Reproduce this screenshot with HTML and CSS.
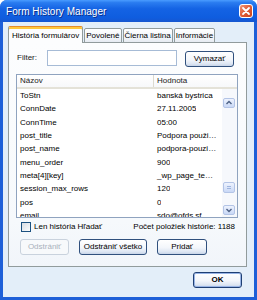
FILE: index.html
```html
<!DOCTYPE html>
<html>
<head>
<meta charset="utf-8">
<link rel="stylesheet" href="styles.css">
</head>
<body>
<div class="win">
  <div class="titlebar">
    <span class="title">Form History Manager</span>
    <span class="close">
      <svg width="14" height="14" viewBox="0 0 14 14">
        <path d="M4 4 L10 10 M10 4 L4 10" stroke="#fff" stroke-width="1.8" stroke-linecap="round"/>
      </svg>
    </span>
  </div>
  <div class="client">
    <div class="tabs">
      <div class="tab active">História formulárov</div>
      <div class="tab">Povolené</div>
      <div class="tab">Čierna listina</div>
      <div class="tab">Informácie</div>
    </div>
    <div class="panel">
      <div class="filter-row">
        <span class="filter-label">Filter:</span>
        <span class="field"></span>
        <button class="btn btn-clear">Vymazať</button>
      </div>
      <div class="list">
        <div class="list-head">
          <div class="col1">Názov</div>
          <div class="col2">Hodnota</div>
        </div>
        <div class="list-body">
          <div class="rows">
            <div class="row"><span class="col1">ToStn</span><span class="col2">banská bystrica</span></div>
            <div class="row"><span class="col1">ConnDate</span><span class="col2">27.11.2005</span></div>
            <div class="row"><span class="col1">ConnTime</span><span class="col2">05:00</span></div>
            <div class="row"><span class="col1">post_title</span><span class="col2">Podpora použi…</span></div>
            <div class="row"><span class="col1">post_name</span><span class="col2">podpora-pouzi…</span></div>
            <div class="row"><span class="col1">menu_order</span><span class="col2">900</span></div>
            <div class="row"><span class="col1">meta[4][key]</span><span class="col2">_wp_page_te…</span></div>
            <div class="row"><span class="col1">session_max_rows</span><span class="col2">120</span></div>
            <div class="row"><span class="col1">pos</span><span class="col2">0</span></div>
            <div class="row"><span class="col1">email</span><span class="col2">sdo@ofds.sf</span></div>
          </div>
          <div class="sbar">
            <span class="sb-btn sb-up">
              <svg width="12" height="10" viewBox="0 0 12 10"><path d="M3.5 6 L6 3.5 L8.5 6" fill="none" stroke="#4d6185" stroke-width="1.4"/></svg>
            </span>
            <span class="sb-thumb">
              <svg width="12" height="11" viewBox="0 0 12 11"><path d="M4 4.5 H8 M4 6.5 H8" stroke="#9fb5de" stroke-width="1"/></svg>
            </span>
            <span class="sb-btn sb-down">
              <svg width="12" height="10" viewBox="0 0 12 10"><path d="M3.5 4 L6 6.5 L8.5 4" fill="none" stroke="#4d6185" stroke-width="1.4"/></svg>
            </span>
          </div>
        </div>
      </div>
      <div class="status-row">
        <label class="check"><span class="cb"></span>Len história Hľadať</label>
        <span class="count">Počet položiek histórie: 1188</span>
      </div>
      <div class="btn-row">
        <button class="btn btn-del" disabled>Odstrániť</button>
        <button class="btn btn-delall">Odstrániť všetko</button>
        <button class="btn btn-add">Pridať</button>
      </div>
    </div>
    <div class="footer">
      <button class="btn btn-ok">OK</button>
    </div>
  </div>
</div>
</body>
</html>
```

FILE: styles.css
```css
* { box-sizing: border-box; }
html, body {
  margin: 0;
  padding: 0;
  background: #ffffff;
}
body {
  font-family: "Liberation Sans", Arial, sans-serif;
  font-size: 8px;
  color: #000;
}
.win {
  width: 257px;
  height: 300px;
  display: flex;
  flex-direction: column;
  background: #1d5fd8;
  border-radius: 7px 7px 0 0;
  overflow: hidden;
}
.titlebar {
  height: 22px;
  flex: 0 0 22px;
  display: flex;
  align-items: center;
  justify-content: space-between;
  padding: 0 4px 0 6px;
  background: linear-gradient(#4a9cff 0%, #2a7cf0 12%, #1463e4 40%, #0f5ddf 80%, #1656d0 100%);
}
.title {
  color: #fff;
  font-size: 10px;
  text-shadow: 1px 1px 0 #0b2f8a;
  letter-spacing: 0.05px;
}
.close {
  width: 14px;
  height: 14px;
  border: 1px solid #fff;
  border-radius: 3px;
  background: linear-gradient(135deg, #f0977a 0%, #e1603a 45%, #c8431c 100%);
  display: flex;
  align-items: center;
  justify-content: center;
}
.close svg { display: block; margin: -1px; }
.client {
  flex: 1;
  margin: 0 3px 3px;
  background: #e3eef9;
  padding: 4px 7px 0 5px;
  display: flex;
  flex-direction: column;
}
.tabs {
  display: flex;
  align-items: flex-end;
  height: 17px;
  margin-bottom: -1px;
  position: relative;
  z-index: 1;
}
.tab {
  height: 15px;
  padding: 0 1px;
  border: 1px solid #919b9c;
  border-radius: 2px 2px 0 0;
  background: linear-gradient(#ffffff, #f1f4f8 70%, #e6ebf2);
  line-height: 13px;
  white-space: nowrap;
  margin-right: 1px;
}
.tab.active {
  height: 17px;
  padding: 0 3px;
  border-bottom: none;
  border-top: 1px solid #e68b2c;
  box-shadow: inset 0 2px 0 #ffc83c;
  background: #fcfdfe;
  line-height: 16px;
  padding-top: 1px;
}
.panel {
  width: 239px;
  height: 225px;
  border: 1px solid #919b9c;
  background: linear-gradient(#fcfdfe, #f6f9fc 80%, #f1f5fa);
  padding: 7px 7px 0 7px;
  display: flex;
  flex-direction: column;
}
.filter-row {
  display: flex;
  height: 17px;
  align-items: flex-start;
}
.filter-label {
  width: 30px;
  margin-left: 1px;
  line-height: 16px;
  color: #1a1a1a;
}
.field {
  width: 130px;
  height: 16px;
  border: 1px solid #a6bbd6;
  background: #fff;
}
.btn {
  font-family: "Liberation Sans", Arial, sans-serif;
  font-size: 8px;
  color: #000;
  height: 16px;
  padding: 0;
  border: 1px solid #30507d;
  border-radius: 3px;
  background: linear-gradient(#ffffff 0%, #f3f6fb 55%, #dce5f2 85%, #c7d4e8 100%);
  text-align: center;
  line-height: 14px;
}
.btn-clear {
  width: 49px;
  margin-left: 8px;
  align-self: flex-end;
}
.list {
  margin-top: 7px;
  width: 222px;
  height: 144px;
  border: 1px solid #8fa3bf;
  background: #fff;
  display: flex;
  flex-direction: column;
}
.list-head {
  height: 14px;
  flex: 0 0 14px;
  display: flex;
  background: linear-gradient(#ffffff, #f7f8fa);
  border-bottom: 2px solid #e4e2d8;
  line-height: 12px;
}
.list-head .col1 {
  width: 137px;
  padding-left: 3px;
  border-right: 1px solid #dcdad0;
  color: #222;
}
.list-head .col2 {
  padding-left: 3px;
  color: #222;
}
.list-body {
  flex: 1;
  display: flex;
  overflow: hidden;
}
.rows {
  flex: 1;
  overflow: hidden;
}
.row {
  height: 13.333px;
  line-height: 13.333px;
  display: flex;
  white-space: nowrap;
}
.row .col1 {
  width: 137px;
  padding-left: 3px;
}
.row .col2 {
  padding-left: 3px;
  overflow: hidden;
}
.sbar {
  width: 15px;
  flex: 0 0 15px;
  background: #f6f8fc;
  display: flex;
  flex-direction: column;
  padding: 9px 0 2px 1px;
}
.sb-btn, .sb-thumb {
  width: 12px;
  border: 1px solid #b3c4e6;
  border-radius: 2px;
  background: linear-gradient(#eef3fe, #c9d8f6);
  display: flex;
  align-items: center;
  justify-content: center;
}
.sb-btn svg, .sb-thumb svg { display: block; flex: none; }
.sb-up { height: 10px; }
.sb-thumb { height: 11px; margin-top: 74px; }
.sb-down { height: 10px; margin-top: 12px; }
.status-row {
  margin-top: 3px;
  height: 11px;
  display: flex;
  align-items: center;
  justify-content: space-between;
  width: 222px;
}
.check {
  display: flex;
  align-items: center;
  margin-left: 5px;
}
.cb {
  width: 10px;
  height: 10px;
  border: 1px solid #1c5180;
  background: linear-gradient(135deg, #d8dce2, #f4f6f8 80%, #fff);
  margin-right: 3px;
}
.count {
  margin-right: 3px;
}
.btn-row {
  margin-top: 7px;
  display: flex;
  padding-left: 4px;
  gap: 10px;
}
.btn-del {
  width: 49px;
  border-color: #c9d2dd;
  color: #a9b1bc;
  background: #f7f9fb;
}
.btn-delall { width: 68px; }
.btn-add { width: 50px; }
.footer {
  display: flex;
  justify-content: flex-end;
  padding-top: 5px;
  padding-right: 5px;
}
.btn-ok {
  width: 49px;
  font-weight: bold;
  border-color: #1f3f74;
  box-shadow: inset 0 0 0 1px #98b4e6;
}
```
